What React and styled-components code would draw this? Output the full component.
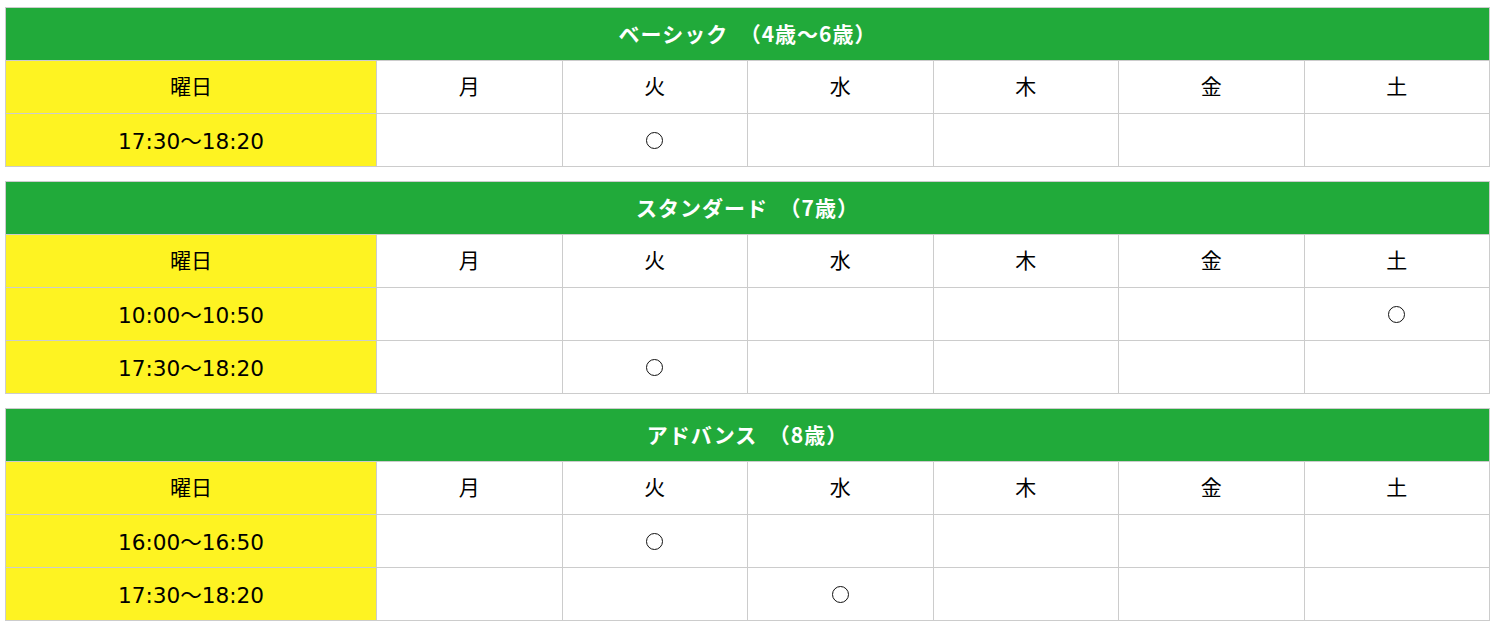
import React from 'react';
import styled, { createGlobalStyle } from 'styled-components';

const GlobalStyle = createGlobalStyle`
  html, body {
    margin: 0;
    padding: 0;
    background: #fff;
  }
  body {
    font-family: "DejaVu Sans", "Noto Sans CJK JP", sans-serif;
    color: #000;
  }
`;

const Page = styled.div`
  padding: 7px 5px 0 5px;
  display: flex;
  flex-direction: column;
  gap: 14px;
`;

const Table = styled.table`
  width: 100%;
  border-collapse: collapse;
  table-layout: fixed;
`;

const TitleCell = styled.th`
  background: #21aa3a;
  color: #fff;
  font-family: "Noto Sans CJK JP", sans-serif;
  font-weight: 700;
  font-size: 21px;
  letter-spacing: 1px;
  height: 50px;
  padding: 0 0 2px;
  border: 1px solid #cccccc;
  text-align: center;
  vertical-align: middle;
`;

const Row = styled.tr`
  height: 53px;
`;

const Cell = styled.td`
  background: ${p => (p.$label ? '#fef322' : '#fff')};
  border: 1px solid #cccccc;
  font-size: ${p => (p.$kanji ? '21px' : '21.6px')};
  text-align: center;
  vertical-align: middle;
  padding: 0 0 ${p => (p.$kanji ? '4px' : '2px')};
  font-family: ${p => (p.$kanji ? '"Noto Sans CJK JP", sans-serif' : 'inherit')};
`;

const Mark = styled.span`
  display: inline-block;
  width: 17px;
  height: 17px;
  border: 1.3px solid #111;
  border-radius: 50%;
  box-sizing: border-box;
  vertical-align: middle;
`;

const days = ['月', '火', '水', '木', '金', '土'];

const schedules = [
  { title: 'ベーシック　（4歳～6歳）', rows: [{ time: '17:30～18:20', on: [1] }] },
  {
    title: 'スタンダード　（7歳）',
    rows: [
      { time: '10:00～10:50', on: [5] },
      { time: '17:30～18:20', on: [1] },
    ],
  },
  {
    title: 'アドバンス　（8歳）',
    rows: [
      { time: '16:00～16:50', on: [1] },
      { time: '17:30～18:20', on: [2] },
    ],
  },
];

const Schedule = ({ title, rows }) => (
  <Table>
    <colgroup>
      <col style={{ width: '25%' }} />
      {days.map(d => (
        <col key={d} style={{ width: '12.5%' }} />
      ))}
    </colgroup>
    <thead>
      <tr>
        <TitleCell colSpan={7}>{title}</TitleCell>
      </tr>
    </thead>
    <tbody>
      <Row>
        <Cell $label $kanji>曜日</Cell>
        {days.map(d => (
          <Cell key={d} $kanji>{d}</Cell>
        ))}
      </Row>
      {rows.map(r => (
        <Row key={r.time}>
          <Cell $label>{r.time}</Cell>
          {days.map((d, i) => (
            <Cell key={d}>{r.on.includes(i) ? <Mark /> : null}</Cell>
          ))}
        </Row>
      ))}
    </tbody>
  </Table>
);

const App = () => (
  <Page>
    <GlobalStyle />
    {schedules.map(s => (
      <Schedule key={s.title} {...s} />
    ))}
  </Page>
);

export default App;
